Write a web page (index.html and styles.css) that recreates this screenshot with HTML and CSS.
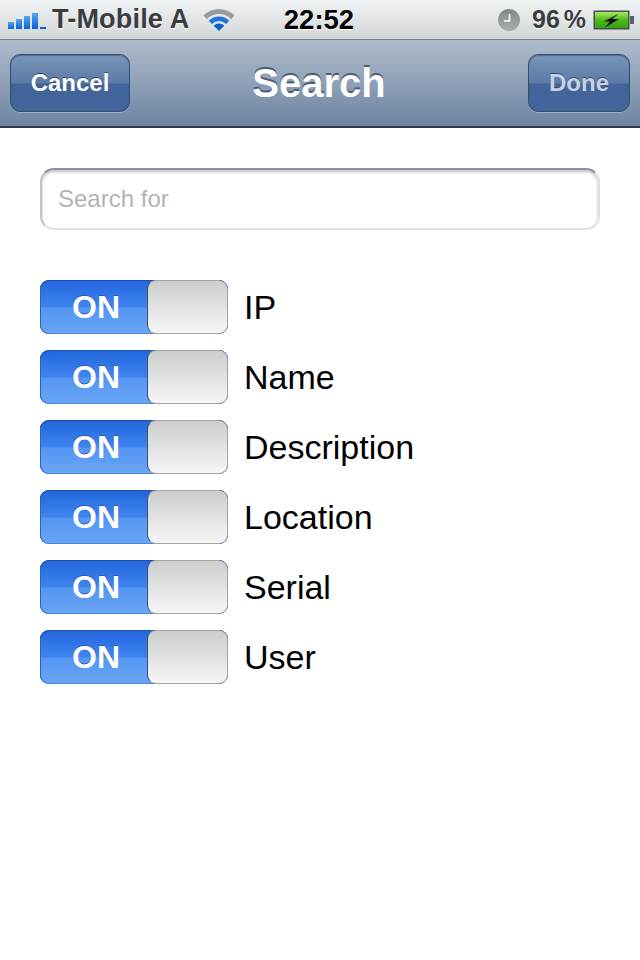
FILE: index.html
```html
<!DOCTYPE html>
<html lang="en">
<head>
	<meta charset="UTF-8">
	<meta name="viewport" content="width=device-width, initial-scale=1.0">
	<title>Search</title>
	<link rel="stylesheet" href="styles.css">
</head>
<body>
	<div class="statusBar">
		<div class="statusLeft">
			<svg class="signal" width="46" height="20" viewBox="0 0 46 20">
				<defs>
					<linearGradient id="bar" x1="0" y1="0" x2="0" y2="1">
						<stop offset="0" stop-color="#55a4ee"/>
						<stop offset="1" stop-color="#0a62d8"/>
					</linearGradient>
				</defs>
				<rect x="0" y="12" width="6" height="7" fill="url(#bar)"/>
				<rect x="8" y="9" width="6" height="10" fill="url(#bar)"/>
				<rect x="16" y="6" width="6" height="13" fill="url(#bar)"/>
				<rect x="24" y="3" width="6" height="16" fill="url(#bar)"/>
				<rect x="32" y="17" width="6" height="2" fill="#0a62d8"/>
			</svg>
			<span class="carrier">T-Mobile A</span>
			<svg class="wifi" width="32" height="26" viewBox="0 0 32 26">
				<path d="M0.440 8.440 A22 22 0 0 1 31.560 8.440 L28.020 11.980 A17 17 0 0 0 3.980 11.980 Z" fill="#9b9b9b"/>
				<path d="M5.750 13.750 A14.500 14.500 0 0 1 26.250 13.750 L23.070 16.930 A10 10 0 0 0 8.930 16.930 Z" fill="#1f73dc"/>
				<path d="M10.700 18.700 A7.500 7.500 0 0 1 21.300 18.700 L16 24 Z" fill="#0f5fcb"/>
			</svg>
		</div>
		<span class="clock">22:52</span>
		<div class="statusRight">
			<svg class="alarm" width="22" height="22" viewBox="0 0 22 22">
				<defs>
					<linearGradient id="dial" x1="0" y1="0" x2="0" y2="1">
						<stop offset="0" stop-color="#7f8789"/>
						<stop offset="1" stop-color="#a9afb0"/>
					</linearGradient>
				</defs>
				<circle cx="11" cy="11" r="11" fill="url(#dial)"/>
				<path d="M11.500 5 V12 H6" fill="none" stroke="#fff" stroke-width="1.600"/>
			</svg>
			<span class="percent">96 %</span>
			<svg class="battery" width="42" height="22" viewBox="0 0 42 22">
				<defs>
					<linearGradient id="charge" x1="0" y1="0" x2="0" y2="1">
						<stop offset="0" stop-color="#a8ec60"/>
						<stop offset="0.500" stop-color="#4fb81c"/>
						<stop offset="1" stop-color="#38a014"/>
					</linearGradient>
				</defs>
				<rect x="0.500" y="1.500" width="36" height="19" fill="#4a4f52"/>
				<rect x="2" y="3" width="33" height="16" fill="url(#charge)"/>
				<rect x="37" y="7" width="4" height="8" fill="#5c6266"/>
				<path d="M26 4.500 L11 12.500 H17 L12 18.500 L26 10 H19 Z" fill="#0d0d0d"/>
			</svg>
		</div>
	</div>

	<div class="navBar">
		<button class="navButton cancelButton">Cancel</button>
		<h1 class="navTitle">Search</h1>
		<button class="navButton doneButton">Done</button>
	</div>

	<div class="content">
		<div class="searchBox">Search for</div>
		<div class="options">
			<div class="option"><div class="toggle"><span class="toggleOn">ON</span><span class="toggleKnob"></span></div><span class="optionLabel">IP</span></div>
			<div class="option"><div class="toggle"><span class="toggleOn">ON</span><span class="toggleKnob"></span></div><span class="optionLabel">Name</span></div>
			<div class="option"><div class="toggle"><span class="toggleOn">ON</span><span class="toggleKnob"></span></div><span class="optionLabel">Description</span></div>
			<div class="option"><div class="toggle"><span class="toggleOn">ON</span><span class="toggleKnob"></span></div><span class="optionLabel">Location</span></div>
			<div class="option"><div class="toggle"><span class="toggleOn">ON</span><span class="toggleKnob"></span></div><span class="optionLabel">Serial</span></div>
			<div class="option"><div class="toggle"><span class="toggleOn">ON</span><span class="toggleKnob"></span></div><span class="optionLabel">User</span></div>
		</div>
	</div>
</body>
</html>
```

FILE: styles.css
```css
html, body {
	margin: 0;
	padding: 0;
}
body {
	width: 640px;
	height: 960px;
	overflow: hidden;
	background-color: #fff;
	font-family: "Liberation Sans", Arial, sans-serif;
}

.statusBar {
	height: 40px;
	box-sizing: border-box;
	display: grid;
	grid-template-columns: 1fr auto 1fr;
	align-items: center;
	padding: 0 5px 0 8px;
	background: linear-gradient(#f1f4f5, #d3d6d7);
	border-bottom: 1px solid #7d8084;
}
.statusLeft, .statusRight {
	display: flex;
	align-items: center;
}
.statusRight {
	justify-content: flex-end;
}
.signal {
	margin-right: -2px;
}
.carrier {
	font-size: 27px;
	letter-spacing: 0.2px;
	font-weight: bold;
	color: #3a3c3e;
	text-shadow: 0 1px 0 #fff;
	white-space: nowrap;
}
.wifi {
	margin-left: 13px;
}
.clock {
	margin-right: 5px;
	font-size: 27.5px;
	font-weight: bold;
	color: #060606;
	text-shadow: 0 1px 0 #fff;
}
.alarm {
	margin-right: 12px;
}
.percent {
	font-size: 25px;
	font-weight: bold;
	color: #3a3c3e;
	text-shadow: 0 1px 0 #fff;
	margin-right: 7px;
	word-spacing: -3px;
	white-space: nowrap;
}

.navBar {
	height: 88px;
	box-sizing: border-box;
	display: grid;
	grid-template-columns: 1fr auto 1fr;
	align-items: center;
	padding: 0 10px;
	background: linear-gradient(#b0bccc, #6d84a2);
	border-bottom: 2px solid #2d3642;
}
.navButton {
	height: 58px;
	padding: 0;
	font-family: inherit;
	font-size: 24px;
	font-weight: bold;
	color: #fff;
	text-shadow: 0 -1px 0 #33496a;
	border: 1px solid #38506f;
	border-radius: 10px;
	background: linear-gradient(#7b95b9 0%, #5b7aa6 50%, #41659a 52%, #42669b 100%);
	box-shadow: 0 1px 0 rgba(255, 255, 255, 0.3), inset 0 1px 1px rgba(40, 60, 90, 0.5);
}
.cancelButton {
	width: 120px;
	justify-self: start;
}
.doneButton {
	width: 102px;
	justify-self: end;
	color: #c6d1e4;
}
.navTitle {
	margin: 0 2px 0 0;
	font-size: 40px;
	font-weight: bold;
	color: #fff;
	text-shadow: 0 -2px 0 #4a5a70;
}

.content {
	padding: 40px;
}
.searchBox {
	height: 62px;
	box-sizing: border-box;
	padding: 0 16px;
	display: flex;
	align-items: center;
	font-size: 24px;
	color: #b3b3b3;
	border: 2px solid #dfe2e5;
	border-top-color: #8b919a;
	border-left-color: #c0c4c9;
	border-radius: 14px;
	box-shadow: inset 0 2px 3px rgba(100, 105, 115, 0.4);
}
.options {
	margin-top: 50px;
	display: flex;
	flex-direction: column;
	gap: 16px;
}
.option {
	display: flex;
	align-items: center;
	gap: 16px;
}
.toggle {
	width: 188px;
	height: 54px;
	display: flex;
	border-radius: 9px;
	overflow: hidden;
	background: linear-gradient(#2166dc 0%, #3f84ef 50%, #5496f2 52%, #6ba6f6 100%);
	box-shadow: inset 0 1px 1px #1b4fa5, inset 1px 0 0 #2a68c8, inset 0 -1px 0 #4a86dc;
}
.toggleOn {
	width: 107px;
	flex: none;
	padding: 0 0 0 5px;
	box-sizing: border-box;
	display: flex;
	align-items: center;
	justify-content: center;
	font-size: 32px;
	font-weight: bold;
	color: #fff;
	text-shadow: 0 -1px 0 #2a5cb0;
}
.toggleKnob {
	flex: 1;
	box-sizing: border-box;
	border: 1px solid #a4a4a4;
	border-left-color: #33517f;
	border-radius: 9px;
	background: linear-gradient(#cdcdcd, #f6f6f6);
}
.optionLabel {
	font-size: 34px;
	color: #000;
}
```
